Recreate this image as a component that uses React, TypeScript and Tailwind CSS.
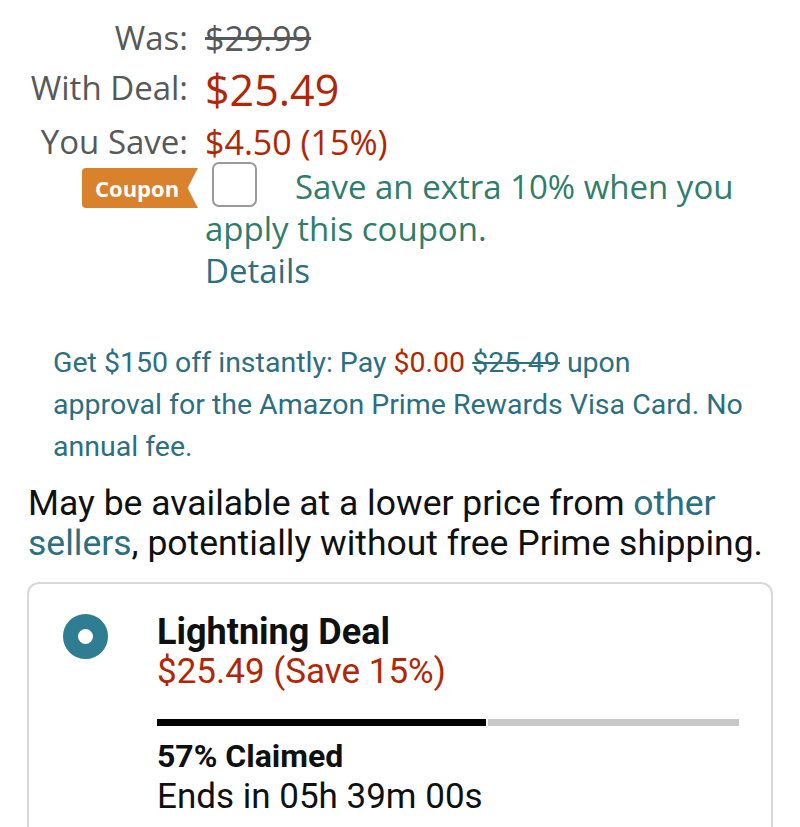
export default function App() {
  return (
    <div className="w-[800px] h-[827px] overflow-hidden bg-white font-['Open_Sans',sans-serif]">
      <div className="grid grid-cols-[188px_1fr] gap-x-[17px] pt-[14px] text-[#565959]">
        <div className="text-right text-[33px] leading-[48px]">Was:</div>
        <div className="text-[34px] leading-[48px] line-through">$29.99</div>

        <div className="text-right text-[33px] leading-[52px]">With Deal:</div>
        <div className="text-[43px] leading-[52px] text-[#b12704] pt-[2px]">$25.49</div>

        <div className="text-right text-[33px] leading-[52px]">You Save:</div>
        <div className="text-[34px] leading-[52px] text-[#b12704]">$4.50 (15%)</div>
      </div>

      <div className="flex -mt-[2px]">
        <div className="w-[205px] shrink-0 pl-[82px] pt-[2px]">
          <div className="h-[40px] w-[116px] bg-[#d9822b] rounded-l-[4px] flex items-center pl-[13px] text-white font-bold text-[22px] [clip-path:polygon(0_0,100%_0,91%_50%,100%_100%,0_100%)]">
            Coupon
          </div>
        </div>
        <div className="flex-1 pr-[30px] text-[33px] leading-[42px] text-[#2f7d6a]">
          <div className="float-left w-[90px] h-[42px] pl-[7px]">
            <div className="h-[45px] w-[45px] -mt-[4px] rounded-[7px] border-2 border-[#9a9a9a] bg-white" />
          </div>
          Save an extra 10% when you apply this coupon.
          <div className="text-[#2b6f80]">Details</div>
        </div>
      </div>

      <div className="pl-[53px] mt-[50px] font-['Roboto',sans-serif] text-[28.5px] leading-[42px] text-[#2b6f80]">
        Get $150 off instantly: Pay <span className="text-[#b12704]">$0.00</span>{' '}
        <span className="line-through">$25.49</span> upon
        <br />
        approval for the Amazon Prime Rewards Visa Card. No
        <br />
        annual fee.
      </div>

      <div className="pl-[28px] mt-[15px] font-['Roboto',sans-serif] text-[35.5px] leading-[40px] text-[#0f1111]">
        May be available at a lower price from <span className="text-[#2b6f80]">other</span>
        <br />
        <span className="text-[#2b6f80]">sellers</span>, potentially without free Prime shipping.
      </div>

      <div className="mx-[27px] mt-[19px] border-2 border-b-0 border-[#d5d9d9] rounded-t-[12px] h-[300px] flex pt-[28px]">
        <div className="w-[128px] shrink-0 pl-[34px] pt-[2px]">
          <div className="h-[45px] w-[45px] rounded-full border-[15px] border-[#2f7d92] bg-white" />
        </div>
        <div className="flex-1 pr-[32px] font-['Roboto',sans-serif] text-[#0f1111]">
          <div className="text-[36px] leading-[40px] font-bold">Lightning Deal</div>
          <div className="text-[35px] leading-[40px] text-[#b12704]">$25.49 (Save 15%)</div>
          <div className="mt-[27px] flex h-[7px]">
            <div className="w-[56.5%] bg-black" />
            <div className="flex-1 bg-[#c8c8c8] ml-[2px]" />
          </div>
          <div className="mt-[10px] text-[32px] leading-[40px] font-bold">57% Claimed</div>
          <div className="text-[35px] leading-[42px]">Ends in 05h 39m 00s</div>
        </div>
      </div>
    </div>
  )
}
